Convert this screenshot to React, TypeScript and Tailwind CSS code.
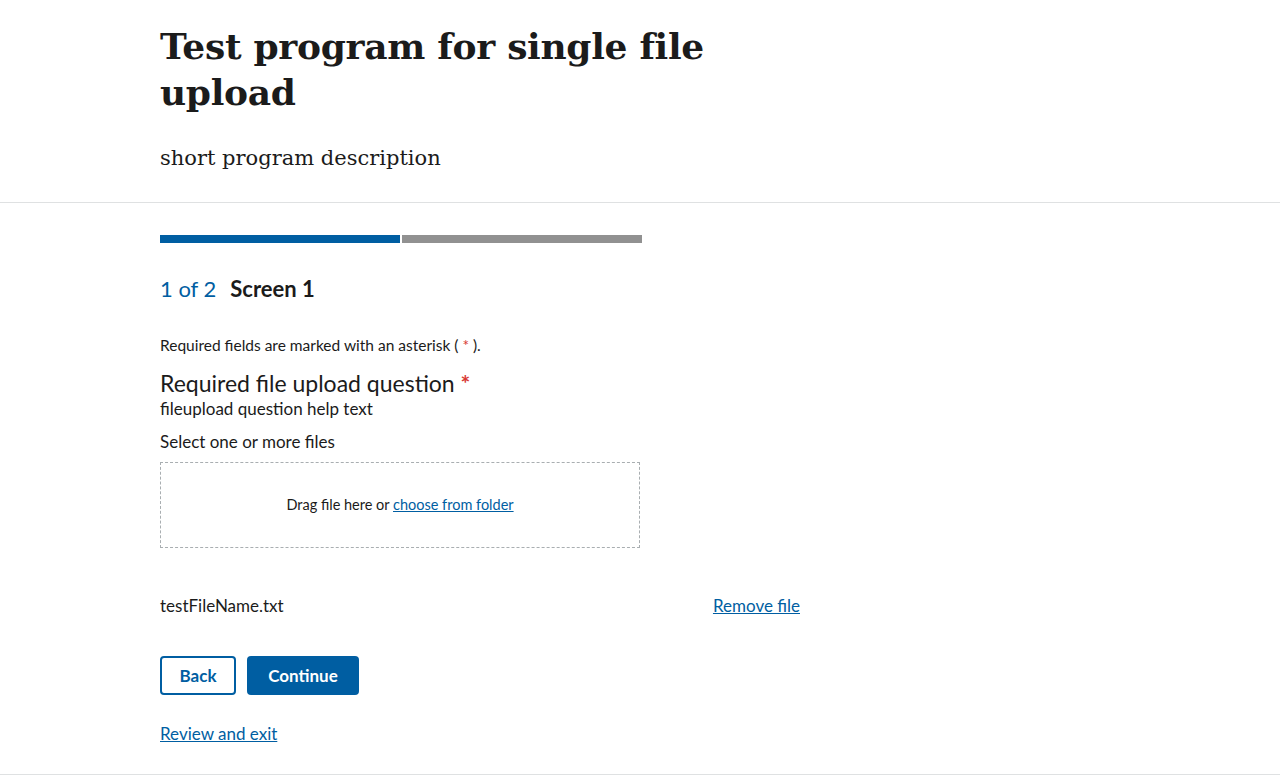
import React from "react";

const sans = { fontFamily: "Lato, 'Noto Sans', sans-serif" };
const serif = { fontFamily: "'DejaVu Serif', 'Liberation Serif', serif" };

export default function App() {
  return (
    <div className="min-h-[775px] bg-white text-[#1b1b1b]" style={sans}>
      <header className="border-b border-[#dfe1e2]">
        <div className="pl-[160px] pt-[23px] pb-[29px]">
          <h1
            className="max-w-[570px] text-[36px] leading-[46px] font-bold tracking-[-0.3px] text-[#1b1b1b]"
            style={serif}
          >
            Test program for single file upload
          </h1>
          <p className="mt-[28px] text-[21px] leading-[30px]" style={serif}>
            short program description
          </p>
        </div>
      </header>

      <main className="pl-[160px] pt-[32px] w-[800px]">
        <div className="flex gap-[2px] w-[482px]">
          <div className="h-[8px] w-[240px] bg-[#005ea2]" />
          <div className="h-[8px] w-[240px] bg-[#919191]" />
        </div>

        <h2 className="mt-[31px] flex items-baseline text-[22px] leading-[30px]">
          <span className="text-[#005ea2]">1 of 2</span>
          <span className="ml-[14px] font-bold">Screen 1</span>
        </h2>

        <p className="mt-[31px] text-[15.5px] leading-[20px]">
          Required fields are marked with an asterisk ({" "}
          <span className="text-[#d83933]">*</span> ).
        </p>

        <div className="mt-[14px] text-[23px] leading-[28px]">
          Required file upload question{" "}
          <span className="text-[#d83933] font-bold">*</span>
        </div>
        <div className="text-[17px] leading-[22px] mt-[1px]">fileupload question help text</div>

        <div className="mt-[11px] text-[17px] leading-[22px]">Select one or more files</div>

        <div className="mt-[9px] h-[86px] w-[480px] border border-dashed border-[#a9aeb1] flex items-center justify-center text-[14.5px]">
          <span>
            Drag file here or{" "}
            <a className="text-[#005ea2] underline" href="#">
              choose from folder
            </a>
          </span>
        </div>

        <div className="mt-[47px] flex justify-between items-center w-[640px] text-[17px] leading-[22px]">
          <span>testFileName.txt</span>
          <a className="text-[#005ea2] underline" href="#">
            Remove file
          </a>
        </div>

        <div className="mt-[39px] flex gap-[11px]">
          <button className="h-[39px] w-[76px] rounded-[4px] border-2 border-[#005ea2] text-[#005ea2] font-bold text-[17px]">
            Back
          </button>
          <button className="h-[39px] w-[112px] rounded-[4px] bg-[#005ea2] text-white font-bold text-[17px]">
            Continue
          </button>
        </div>

        <div className="mt-[28px] text-[17px] leading-[22px]">
          <a className="text-[#005ea2] underline" href="#">
            Review and exit
          </a>
        </div>
      </main>
      <div className="mt-[29px] border-b border-[#dfe1e2]" />
    </div>
  );
}
